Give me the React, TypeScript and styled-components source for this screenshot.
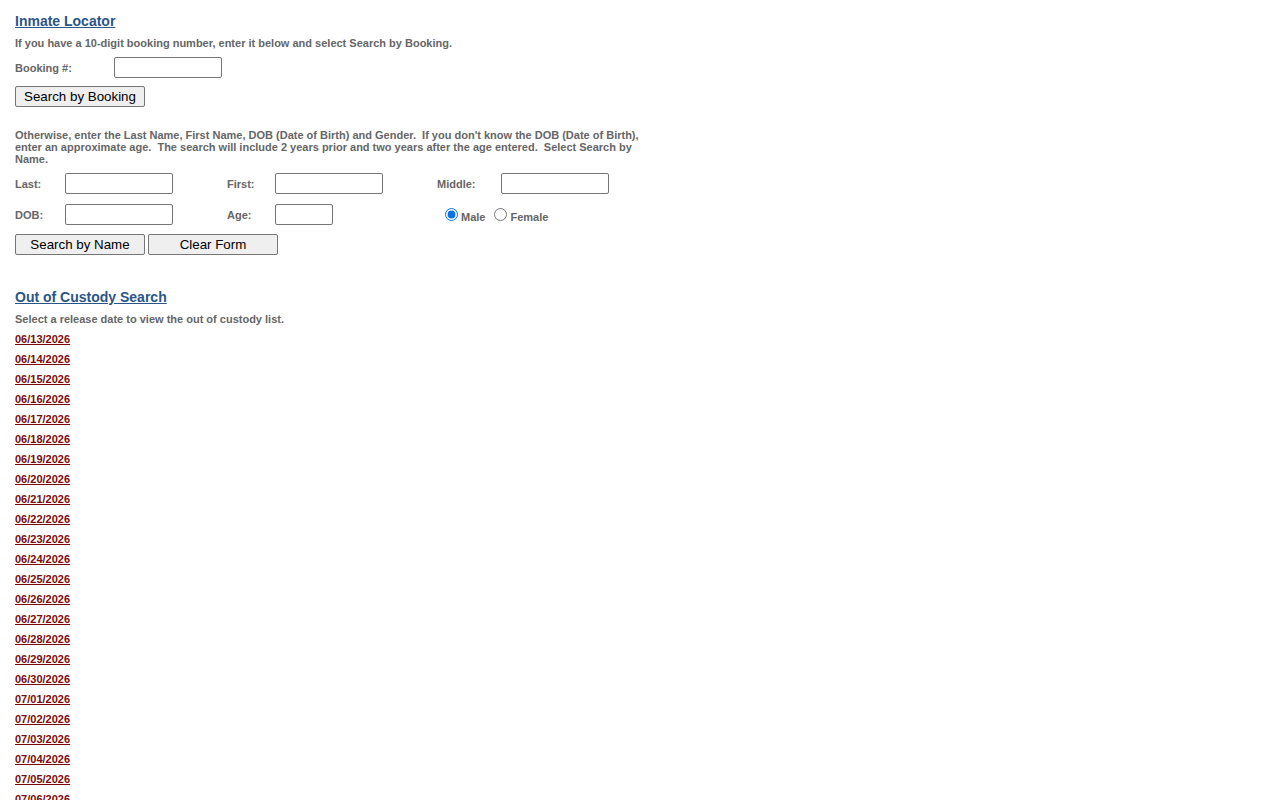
import React from 'react'
import styled, { createGlobalStyle } from 'styled-components'

const GlobalStyle = createGlobalStyle`
  html, body {
    margin: 0;
    padding: 0;
    background: #ffffff;
  }
  body {
    font-family: "Liberation Sans", Arial, sans-serif;
  }
`

const Page = styled.div`
  padding: 13px 15px 20px 15px;
  width: 630px;
`

const Heading = styled.a`
  display: block;
  font-size: 14px;
  line-height: 16px;
  font-weight: 700;
  color: #2b5587;
  text-decoration: underline;
`

const Note = styled.p<{ $top?: number }>`
  margin: ${(p) => p.$top ?? 8}px 0 0 0;
  font-size: 11px;
  line-height: ${(p) => (p.$top && p.$top > 15 ? 12 : 13)}px;
  font-weight: 700;
  color: #666666;
`

const BookingRow = styled.div`
  display: flex;
  align-items: center;
  margin-top: 7px;
`

const Label = styled.label<{ $w?: number }>`
  width: ${(p) => p.$w ?? 50}px;
  flex-shrink: 0;
  font-size: 11px;
  font-weight: 700;
  color: #666666;
`

const TextBox = styled.input<{ $w?: number }>`
  box-sizing: border-box;
  width: ${(p) => p.$w ?? 108}px;
  height: 21px;
  margin: 0;
  padding: 1px 2px;
  border: 1px solid #767676;
  border-radius: 2px;
  background: #ffffff;
  font-family: "Liberation Sans", Arial, sans-serif;
  font-size: 13px;
`

const Button = styled.button`
  box-sizing: border-box;
  width: 130px;
  height: 21px;
  margin: 0;
  padding: 0 6px;
  border: 1px solid #767676;
  border-radius: 2px;
  background: #efefef;
  color: #000000;
  font-family: "Liberation Sans", Arial, sans-serif;
  font-size: 13.33px;
  line-height: 19px;
  cursor: pointer;
`

const SingleAction = styled.div`
  margin-top: 8px;
`

const NameGrid = styled.div`
  display: grid;
  grid-template-columns: 50px 108px 54px 48px 108px 54px 64px 108px;
  grid-auto-rows: 21px;
  row-gap: 10px;
  align-items: center;
  margin-top: 8px;
`

const Gap = styled.span``

const RadioGroup = styled.div`
  grid-column: span 2;
  display: flex;
  align-items: center;
`

const Radio = styled.input<{ $left: number }>`
  width: 13px;
  height: 13px;
  margin: 0 3px 0 ${(p) => p.$left}px;
  accent-color: #0a73e8;
`

const RadioText = styled.span`
  padding-top: 4px;
  font-size: 11px;
  font-weight: 700;
  color: #666666;
`

const Actions = styled.div`
  display: flex;
  gap: 3px;
  margin-top: 9px;
`

const SectionHeading = styled(Heading)`
  margin-top: 34px;
`

const DateList = styled.div`
  margin-top: 3px;
`

const DateLink = styled.a`
  display: block;
  width: max-content;
  font-size: 11px;
  line-height: 20px;
  font-weight: 700;
  color: #7a0b0b;
  text-decoration: underline;
`

const pad = (n: number) => String(n).padStart(2, '0')

const releaseDates = (() => {
  const out: string[] = []
  const d = new Date(2026, 5, 13)
  for (let i = 0; i < 30; i++) {
    out.push(`${pad(d.getMonth() + 1)}/${pad(d.getDate())}/${d.getFullYear()}`)
    d.setDate(d.getDate() + 1)
  }
  return out
})()

export default function App() {
  return (
    <>
      <GlobalStyle />
      <Page>
        <Heading href="#">Inmate Locator</Heading>
        <Note>If you have a 10-digit booking number, enter it below and select Search by Booking.</Note>
        <BookingRow>
          <Label $w={99}>Booking #:</Label>
          <TextBox type="text" />
        </BookingRow>
        <SingleAction>
          <Button type="button">Search by Booking</Button>
        </SingleAction>

        <Note $top={22}>
          Otherwise, enter the Last Name, First Name, DOB (Date of Birth) and Gender.&nbsp; If you don't know the DOB
          (Date of Birth), enter an approximate age.&nbsp; The search will include 2 years prior and two years after the
          age entered.&nbsp; Select Search by Name.
        </Note>
        <NameGrid>
          <Label>Last:</Label>
          <TextBox type="text" />
          <Gap />
          <Label>First:</Label>
          <TextBox type="text" />
          <Gap />
          <Label>Middle:</Label>
          <TextBox type="text" />

          <Label>DOB:</Label>
          <TextBox type="text" />
          <Gap />
          <Label>Age:</Label>
          <TextBox type="text" $w={58} />
          <Gap />
          <RadioGroup>
            <Radio type="radio" name="gender" defaultChecked $left={8} />
            <RadioText>Male</RadioText>
            <Radio type="radio" name="gender" $left={9} />
            <RadioText>Female</RadioText>
          </RadioGroup>
        </NameGrid>
        <Actions>
          <Button type="button">Search by Name</Button>
          <Button type="button">Clear Form</Button>
        </Actions>

        <SectionHeading href="#">Out of Custody Search</SectionHeading>
        <Note>Select a release date to view the out of custody list.</Note>
        <DateList>
          {releaseDates.map((d) => (
            <DateLink key={d} href="#">
              {d}
            </DateLink>
          ))}
        </DateList>
      </Page>
    </>
  )
}
